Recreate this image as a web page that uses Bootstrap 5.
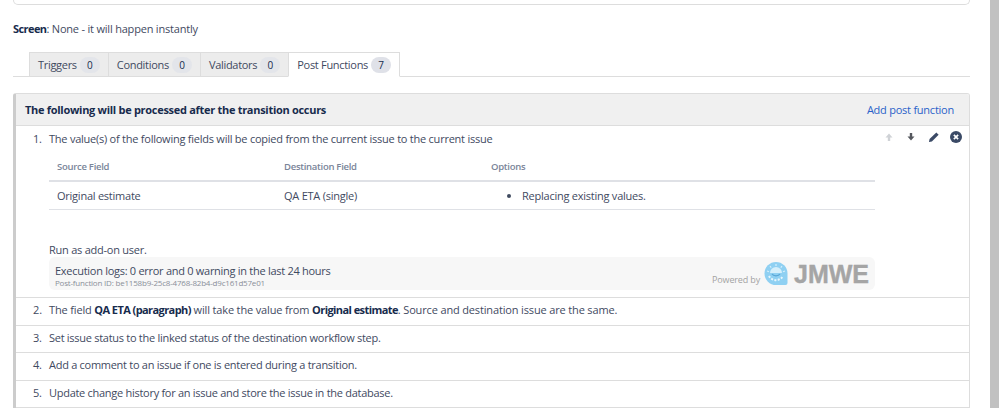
<!DOCTYPE html>
<html lang="en">
<head>
<meta charset="utf-8">
<title>Post Functions</title>
<link href="https://cdn.jsdelivr.net/npm/bootstrap@5.3.0/dist/css/bootstrap.min.css" rel="stylesheet">
<style>
html,body{height:408px;overflow:hidden;background:#fff}
body{font-family:"Open Sans","Noto Sans",sans-serif;font-size:11px;letter-spacing:-.24px;line-height:18px;color:#3f4a5f}
b,strong{color:#172b4d;font-weight:700;letter-spacing:-.58px}
.shell{height:408px}
.pagearea{width:970px;padding-left:13px;flex:none}
.scrolltrack{width:9px;margin-left:20px;background:#c1c1c1;flex:none}
.topcard{height:5px;border:1px solid #ddd;border-top:0;border-radius:0 0 5px 5px}
.screenline{margin:15px 0 14px;height:18px;letter-spacing:-.2px}
.tabstrip{padding-left:16px;border-bottom:1px solid #ddd;height:25px;margin-bottom:16px;letter-spacing:-.3px}
.tabitem{height:25px;border:1px solid #ddd;border-right:0;background:#ececec;display:flex;align-items:center;gap:3px;padding:0 8px;margin:0}
.tabitem:last-child{background:#fff;border:1px solid #ddd;border-bottom-color:#fff}
.cnt{display:inline-block;background:#e3e5ea;color:#172b4d;border-radius:10px;min-width:20px;height:16px;line-height:16px;text-align:center;font-size:10px}
.tabitem:last-child .cnt{background:#dfe1e8}
.panel{border:1px solid #ddd;border-left:3px solid #ccc;border-radius:3px 3px 0 0;overflow:hidden}
.panelhead{height:32px;background:#f0f0f0;border-bottom:1px solid #ddd;padding:0 15px 0 9px}
.panelhead b{letter-spacing:-.29px}
.panelhead a{color:#2a62c9;text-decoration:none}
.rowitem{display:flex;border-bottom:1px solid #ddd;min-height:27.5px;padding:3px 0 0 17px;position:relative;letter-spacing:-.28px}
.rowitem.first{padding-top:4px;letter-spacing:-.24px}
.rowitem.widerrow{letter-spacing:-.15px}
.num{width:16px;flex:none}
.rowbody{width:826px;flex:none}
.fields{margin:8px 0 0;width:826px;--bs-table-color:#3f4a5f}
.fields th{font-size:9.5px;font-weight:600;color:#7a8599;padding:3px 8px 5px;border-bottom:2px solid #dfe1e6;line-height:16px;letter-spacing:-.28px}
.fields td{padding:6px 8px;border-bottom:1px solid #dfe1e6;line-height:15px;height:27px;background:transparent}
.fields ul{margin:0;padding-left:31px}
.runas{margin-top:31px}
.logbox{background:#f7f7f7;border-radius:6px;height:33px;margin:-2px 0 7px;padding:5px 6px 0 6px;display:flex;justify-content:space-between;letter-spacing:-.28px}
.logid{font-size:8px;letter-spacing:-.2px;line-height:8px;color:#8a8f99;margin-top:-1px}
.powered{display:flex;align-items:center;gap:4px;color:#a3a3a3;font-size:9px;letter-spacing:-.15px;margin-top:-5px}
.poweredtext{margin-top:12px}
.jmwe{font-family:"Liberation Sans",sans-serif;font-weight:700;font-size:25px;color:#a5a5a5;letter-spacing:0;margin-left:2px;-webkit-text-stroke:.4px #a5a5a5}
.tools{position:absolute;top:5px;right:7px;display:flex;gap:12px;align-items:center}
.tools .closeic{margin-left:-2px}
</style>
</head>
<body>
<div class="shell d-flex">
 <div class="pagearea">
  <div class="topcard"></div>
  <div class="screenline"><b>Screen</b>: None - it will happen instantly</div>
  <div class="tabstrip d-flex">
   <div class="tabitem">Triggers <span class="cnt">0</span></div>
   <div class="tabitem">Conditions <span class="cnt">0</span></div>
   <div class="tabitem">Validators <span class="cnt">0</span></div>
   <div class="tabitem">Post Functions <span class="cnt">7</span></div>
  </div>
  <div class="panel">
   <div class="panelhead d-flex justify-content-between align-items-center"><b>The following will be processed after the transition occurs</b><a href="#">Add post function</a></div>
   <div class="rowitem first">
    <span class="num">1.</span>
    <div class="rowbody">
     <div>The value(s) of the following fields will be copied from the current issue to the current issue</div>
     <table class="table fields">
      <thead><tr><th style="width:227px">Source Field</th><th style="width:207px">Destination Field</th><th>Options</th></tr></thead>
      <tbody><tr><td>Original estimate</td><td>QA ETA (single)</td><td><ul><li>Replacing existing values.</li></ul></td></tr></tbody>
     </table>
     <div class="runas">Run as add-on user.</div>
     <div class="logbox">
      <div><div>Execution logs: 0 error and 0 warning in the last 24 hours</div><div class="logid">Post-function ID: be1158b9-25c8-4768-82b4-d9c161d57e01</div></div>
      <div class="powered"><span class="poweredtext">Powered by</span>
       <svg width="24" height="23" viewBox="0 0 24 23"><path d="M12 0a11.5 11.5 0 0 1 11.5 11.5V21a2 2 0 0 1-2 2H12A11.5 11.5 0 0 1 12 0z" fill="#8fd0f2"/><path d="M6 11a6 6 0 0 1 12 0" fill="#d5effb"/><path d="M12 2v2M6 4l1.2 1.6M18 4l-1.2 1.6M3 9l2 .7M21 9l-2 .7" stroke="#d5effb" stroke-width="1.2"/><path d="M8 12c1.500 2.400 6.500 2.400 8 0" fill="none" stroke="#5aa7d6" stroke-width="1.3"/><path d="M5 14a8 8 0 0 0 14 0" fill="none" stroke="#e6f6fd" stroke-width="2" stroke-dasharray="2 1.400"/></svg>
       <span class="jmwe">JMWE</span></div>
     </div>
    </div>
    <div class="tools">
     <svg width="10" height="10" viewBox="0 0 10 10"><path d="M5 1.500 8.500 5.500H6.200V9H3.800V5.500H1.500z" fill="#cfd2d6"/></svg>
     <svg width="10" height="10" viewBox="0 0 10 10"><path d="M3.800 1h2.400v3.500h2.300L5 8.500 1.500 4.500h2.300z" fill="#55585e"/></svg>
     <svg width="12" height="12" viewBox="0 0 13 13"><path d="M1 12l.7-3.200L9 1.500 11.500 4 4.200 11.300z" fill="#3b4a66"/></svg>
     <svg class="closeic" width="12" height="12" viewBox="0 0 13 13"><circle cx="6.500" cy="6.500" r="6.500" fill="#3b4a66"/><path d="M4.200 4.200l4.600 4.600M8.800 4.200l-4.600 4.600" stroke="#fff" stroke-width="1.800"/></svg>
    </div>
   </div>
   <div class="rowitem widerrow"><span class="num">2.</span><div>The field <b>QA ETA (paragraph)</b> will take the value from <b>Original estimate</b>. Source and destination issue are the same.</div></div>
   <div class="rowitem"><span class="num">3.</span><div>Set issue status to the linked status of the destination workflow step.</div></div>
   <div class="rowitem"><span class="num">4.</span><div>Add a comment to an issue if one is entered during a transition.</div></div>
   <div class="rowitem"><span class="num">5.</span><div>Update change history for an issue and store the issue in the database.</div></div>
  </div>
 </div>
 <div class="scrolltrack"></div>
</div>
</body>
</html>
